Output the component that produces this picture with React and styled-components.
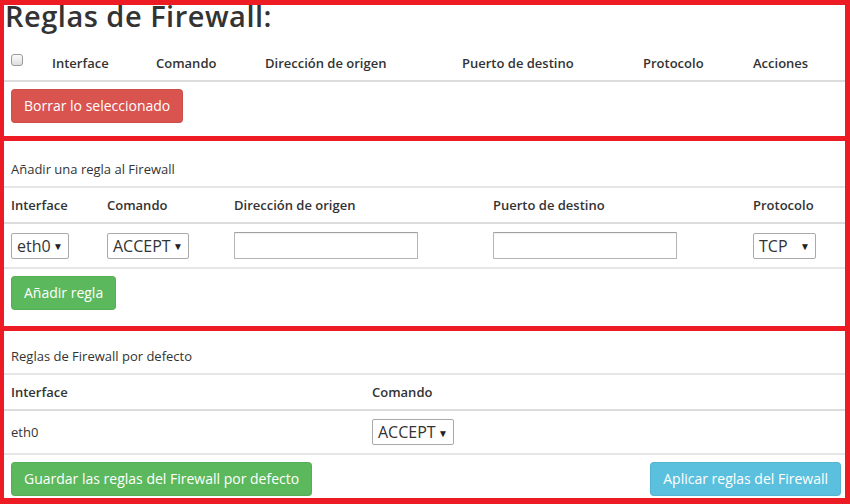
import styled, { createGlobalStyle } from "styled-components";

const Global = createGlobalStyle`
  html, body {
    margin: 0;
    padding: 0;
    background: #ed1c24;
  }
  body {
    font-family: "Open Sans", "Liberation Sans", sans-serif;
    font-size: 13px;
    color: #333;
  }
  * {
    box-sizing: border-box;
  }
`;

const Frame = styled.div`
  width: 850px;
  height: 504px;
  display: flex;
  flex-direction: column;
  gap: 5px;
  padding: 5px 5px 6px 4px;
  background: #ed1c24;
  overflow: hidden;
`;

const Section = styled.section`
  background: #fff;
  height: ${(p) => p.$h}px;
`;

const Title = styled.h1`
  margin: -4px 0 15px;
  padding-left: 1px;
  font-family: "Open Sans", Lato, sans-serif;
  font-weight: 600;
  font-size: 29px;
  line-height: 30px;
  letter-spacing: 0.5px;
  color: #333;
`;

const Caption = styled.div`
  padding: ${(p) => p.$top}px 7px 8px;
  line-height: 18px;
  border-bottom: 2px solid #e6e6e6;
`;

const Row = styled.div`
  display: grid;
  grid-template-columns: ${(p) => p.$cols};
  align-items: center;
  padding: 8px 7px ${(p) => p.$bottom ?? 8}px;
  line-height: 18px;
  border-bottom: 2px solid ${(p) => (p.$head ? "#dcdcdc" : "#e6e6e6")};
`;

const Th = styled.div`
  font-weight: 600;
  color: #333;
`;

const Td = styled.div`
  display: flex;
  align-items: center;
`;

const Check = styled.span`
  display: inline-block;
  width: 12px;
  height: 12px;
  margin-top: -6px;
  border: 1px solid #9a9a9a;
  border-radius: 3px;
  background: linear-gradient(#fbfbfb, #dedede);
`;

const Select = styled.div`
  display: inline-flex;
  align-items: center;
  justify-content: space-between;
  width: ${(p) => p.$w}px;
  height: 26px;
  padding: 0 5px;
  border: 1px solid #a9a9a9;
  border-radius: 2px;
  background: #fff;
  font-size: 16px;
  color: #333;
`;

const Caret = styled.span`
  font-size: 10px;
  color: #222;
  margin-top: 1px;
`;

const Input = styled.input`
  width: 184px;
  height: 27px;
  border: 1px solid #b5b5b5;
  border-top-color: #a0a0a0;
  border-radius: 1px;
  box-shadow: inset 0 1px 1px rgba(0, 0, 0, 0.06);
  font: inherit;
  padding: 0 6px;
`;

const Actions = styled.div`
  display: flex;
  justify-content: space-between;
  padding: 7px 4px 0 7px;
`;

const colors = {
  danger: "#d9534f",
  success: "#5cb85c",
  info: "#5bc0de",
};

const Button = styled.button`
  height: 34px;
  padding: 0 12px;
  border: 1px solid rgba(0, 0, 0, 0.06);
  border-radius: 4px;
  background: ${(p) => colors[p.$kind]};
  color: #fff;
  font-family: "Open Sans", "Liberation Sans", sans-serif;
  font-size: 14px;
  line-height: 20px;
  cursor: pointer;
`;

const Dropdown = ({ value, w }) => (
  <Select $w={w}>
    <span>{value}</span>
    <Caret>▼</Caret>
  </Select>
);

const listCols = "41px 104px 109px 197px 181px 110px 1fr";
const addCols = "96px 127px 259px 260px 1fr";
const defCols = "361px 1fr";

export default function App() {
  return (
    <>
      <Global />
      <Frame>
        <Section $h={131}>
          <Title>Reglas de Firewall:</Title>
          <Row $cols={listCols} $head>
            <Td>
              <Check />
            </Td>
            <Th>Interface</Th>
            <Th>Comando</Th>
            <Th>Dirección de origen</Th>
            <Th>Puerto de destino</Th>
            <Th>Protocolo</Th>
            <Th>Acciones</Th>
          </Row>
          <Actions>
            <Button $kind="danger">Borrar lo seleccionado</Button>
          </Actions>
        </Section>

        <Section $h={185}>
          <Caption $top={19}>Añadir una regla al Firewall</Caption>
          <Row $cols={addCols} $head>
            <Th>Interface</Th>
            <Th>Comando</Th>
            <Th>Dirección de origen</Th>
            <Th>Puerto de destino</Th>
            <Th>Protocolo</Th>
          </Row>
          <Row $cols={addCols} $bottom={8}>
            <Td>
              <Dropdown value="eth0" w={58} />
            </Td>
            <Td>
              <Dropdown value="ACCEPT" w={82} />
            </Td>
            <Td>
              <Input />
            </Td>
            <Td>
              <Input />
            </Td>
            <Td>
              <Dropdown value="TCP" w={63} />
            </Td>
          </Row>
          <Actions>
            <Button $kind="success">Añadir regla</Button>
          </Actions>
        </Section>

        <Section $h={167}>
          <Caption $top={16}>Reglas de Firewall por defecto</Caption>
          <Row $cols={defCols} $head>
            <Th>Interface</Th>
            <Th>Comando</Th>
          </Row>
          <Row $cols={defCols}>
            <Td>eth0</Td>
            <Td>
              <Dropdown value="ACCEPT" w={82} />
            </Td>
          </Row>
          <Actions>
            <Button $kind="success">
              Guardar las reglas del Firewall por defecto
            </Button>
            <Button $kind="info">Aplicar reglas del Firewall</Button>
          </Actions>
        </Section>
      </Frame>
    </>
  );
}
